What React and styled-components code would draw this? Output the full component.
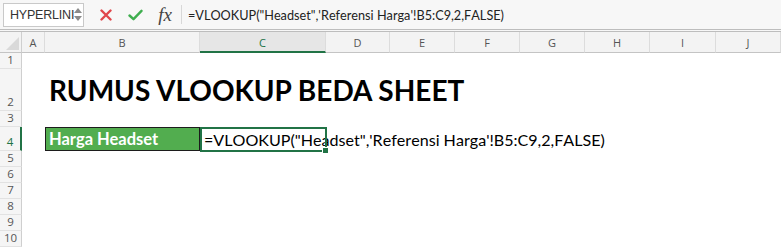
import React from 'react'
import styled, { createGlobalStyle } from 'styled-components'

const GlobalStyle = createGlobalStyle`
  html, body {
    margin: 0;
    padding: 0;
    background: #ffffff;
    font-family: Lato, "Open Sans", sans-serif;
    overflow: hidden;
  }
`

const Window = styled.div`
  width: 781px;
  height: 249px;
  overflow: hidden;
  background: #fff;
`

const Toolbar = styled.div`
  height: 29px;
  display: flex;
  align-items: center;
  background: #f7f7f7;
  border-bottom: 3px double #bdbdbd;
`

const NameBox = styled.div`
  width: 81px;
  height: 24px;
  margin-left: 3px;
  box-sizing: border-box;
  border: 1px solid #c9c9c9;
  background: #fff;
  display: flex;
  align-items: center;
  justify-content: space-between;
  padding: 0 4px 0 6px;
  font-family: "Liberation Sans", sans-serif;
  font-size: 12.5px;
  letter-spacing: -0.2px;
  color: #333;
`

const Spinner = styled.div`
  display: flex;
  flex-direction: column;
  gap: 3px;
  span {
    width: 0;
    height: 0;
    border-left: 4px solid transparent;
    border-right: 4px solid transparent;
  }
  span:first-child { border-bottom: 5px solid #8a8a8a; }
  span:last-child { border-top: 5px solid #8a8a8a; }
`

const IconButton = styled.div`
  width: ${p => p.$w}px;
  display: flex;
  justify-content: center;
  align-items: center;
`

const Fx = styled.div`
  width: 26px;
  margin-left: 4px;
  text-align: center;
  font-family: "Liberation Serif", serif;
  font-style: italic;
  font-size: 19px;
  color: #444;
`

const Divider = styled.div`
  width: 1px;
  height: 19px;
  background: #d8d8d8;
  margin: 0 6px 0 3px;
`

const FormulaText = styled.div`
  font-family: Lato, sans-serif;
  font-size: 12.7px;
  font-kerning: none;
  color: #222;
  white-space: nowrap;
`

const Sheet = styled.div`
  display: grid;
  grid-template-columns: ${p => p.$cols.map(c => c.w + 'px').join(' ')};
  grid-template-rows: 21px ${p => p.$rows.map(r => r.h + 'px').join(' ')};
`

const Corner = styled.div`
  background: #f3f3f3;
  border-right: 1px solid #cfcfcf;
  border-bottom: 1px solid #c4c4c4;
  position: relative;
  &::after {
    content: '';
    position: absolute;
    right: 2px;
    bottom: 2px;
    width: 0;
    height: 0;
    border-left: 13px solid transparent;
    border-bottom: 13px solid #d9d9d9;
  }
`

const ColHead = styled.div`
  background: ${p => (p.$active ? '#e6e6e6' : '#f3f3f3')};
  border-right: 1px solid #dcdcdc;
  border-bottom: ${p => (p.$active ? '2px solid #217346' : '1px solid #c4c4c4')};
  display: flex;
  align-items: center;
  justify-content: center;
  font-family: "Open Sans", sans-serif;
  font-size: 11px;
  color: ${p => (p.$active ? '#217346' : '#555')};
  box-sizing: border-box;
  padding-top: ${p => (p.$active ? '1px' : '0')};
`

const RowHead = styled.div`
  background: #f5f5f5;
  border-right: ${p => (p.$active ? '2px solid #217346' : '1px solid #cfcfcf')};
  border-bottom: 1px solid #e2e2e2;
  box-sizing: border-box;
  display: flex;
  align-items: flex-end;
  justify-content: center;
  padding-bottom: 1px;
  font-family: "Open Sans", sans-serif;
  font-size: 11.5px;
  color: ${p => (p.$active ? '#217346' : '#555')};
`

const Cell = styled.div`
  position: relative;
  min-width: 0;
  white-space: nowrap;
  overflow: visible;
`

const Title = styled.div`
  position: absolute;
  left: 4px;
  bottom: 4px;
  font-family: Lato, sans-serif;
  font-weight: 700;
  font-size: 28px;
  color: #000;
`

const LabelCell = styled.div`
  height: 100%;
  box-sizing: border-box;
  background: #52ad4f;
  border: 1px solid #1c1c1c;
  color: #fff;
  font-family: Lato, sans-serif;
  font-weight: 700;
  font-size: 16.5px;
  display: flex;
  align-items: flex-end;
  padding: 0 0 1px 3px;
`

const Selected = styled.div`
  position: absolute;
  inset: 0 -1px -1px 0;
  border: 2px solid #217346;
  z-index: 2;
  &::after {
    content: '';
    position: absolute;
    right: -4px;
    bottom: -4px;
    width: 5px;
    height: 5px;
    background: #217346;
    border: 1px solid #fff;
  }
`

const CellText = styled.div`
  position: absolute;
  left: 4px;
  bottom: 2px;
  font-family: Lato, sans-serif;
  font-size: 16.1px;
  font-kerning: none;
  color: #000;
  z-index: 1;
`

const cols = [
  { k: '', w: 22 },
  { k: 'A', w: 23 },
  { k: 'B', w: 155 },
  { k: 'C', w: 126 },
  { k: 'D', w: 64 },
  { k: 'E', w: 65 },
  { k: 'F', w: 65 },
  { k: 'G', w: 65 },
  { k: 'H', w: 65 },
  { k: 'I', w: 66 },
  { k: 'J', w: 65 },
]

const rows = [
  { n: 1, h: 16 },
  { n: 2, h: 42 },
  { n: 3, h: 16 },
  { n: 4, h: 24 },
  { n: 5, h: 16 },
  { n: 6, h: 16 },
  { n: 7, h: 16 },
  { n: 8, h: 16 },
  { n: 9, h: 16 },
  { n: 10, h: 16 },
]

const FORMULA = `=VLOOKUP("Headset",'Referensi Harga'!B5:C9,2,FALSE)`

const renderCell = (ref) => {
  if (ref === 'B2') return <Title>RUMUS VLOOKUP BEDA SHEET</Title>
  if (ref === 'B4') return <LabelCell>Harga Headset</LabelCell>
  if (ref === 'C4')
    return (
      <>
        <CellText>{FORMULA}</CellText>
        <Selected />
      </>
    )
  return null
}

const App = () => {
  return (
    <Window>
      <GlobalStyle />
      <Toolbar>
        <NameBox>
          <span>HYPERLINI</span>
          <Spinner>
            <span />
            <span />
          </Spinner>
        </NameBox>
        <IconButton $w={32} style={{ marginLeft: 6 }}>
          <svg width="12" height="12" viewBox="0 0 12 12">
            <path d="M1.5 1.5 L10.5 10.5 M10.5 1.5 L1.5 10.5" stroke="#e0464b" strokeWidth="2.4" strokeLinecap="round" />
          </svg>
        </IconButton>
        <IconButton $w={26}>
          <svg width="15" height="12" viewBox="0 0 15 12">
            <path d="M1.5 6.5 L5.5 10.2 L13.5 1.8" fill="none" stroke="#3fae4f" strokeWidth="2.4" strokeLinecap="round" strokeLinejoin="round" />
          </svg>
        </IconButton>
        <Fx>fx</Fx>
        <Divider />
        <FormulaText>{FORMULA}</FormulaText>
      </Toolbar>
      <Sheet $cols={cols} $rows={rows}>
        {cols.map((c) =>
          c.k === '' ? <Corner key="corner" /> : <ColHead key={c.k} $active={c.k === 'C'}>{c.k}</ColHead>
        )}
        {rows.map((r) => (
          <React.Fragment key={r.n}>
            <RowHead $active={r.n === 4}>{r.n}</RowHead>
            {cols.slice(1).map((c) => (
              <Cell key={c.k + r.n}>{renderCell(c.k + r.n)}</Cell>
            ))}
          </React.Fragment>
        ))}
      </Sheet>
    </Window>
  )
}

export default App
